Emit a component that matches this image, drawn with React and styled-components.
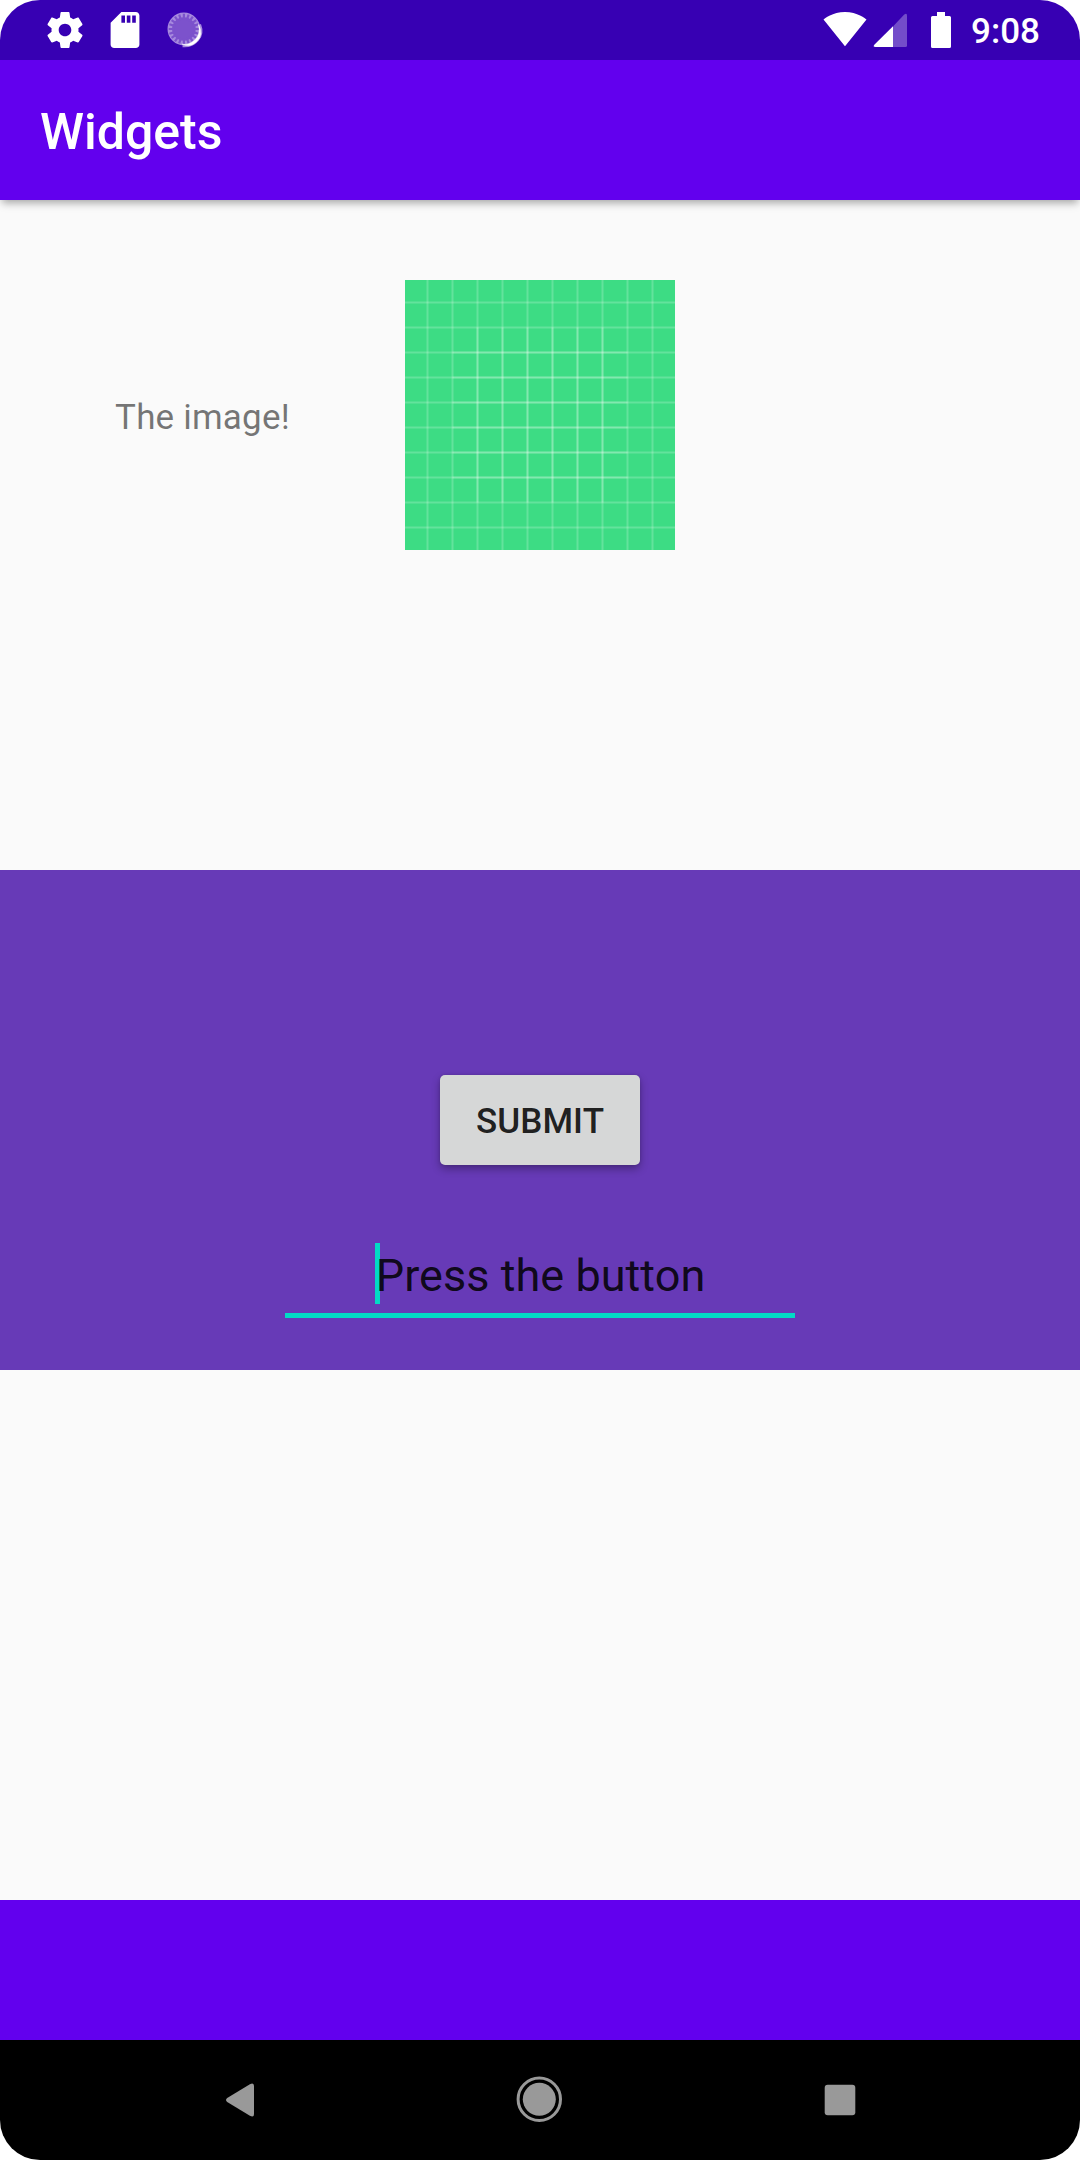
import React from "react";
import styled, { createGlobalStyle } from "styled-components";

const GlobalStyle = createGlobalStyle`
  * { box-sizing: border-box; }
  body {
    margin: 0;
    background: #ffffff;
    font-family: Roboto, "Liberation Sans", sans-serif;
  }
  svg { display: block; flex: none; }
`;

const Screen = styled.div`
  width: 1080px;
  height: 2160px;
  display: flex;
  flex-direction: column;
  overflow: hidden;
  border-radius: 40px;
  background: #fafafa;
`;

const StatusBar = styled.header`
  flex: none;
  height: 60px;
  display: flex;
  align-items: center;
  justify-content: space-between;
  padding: 0 40px 0 43px;
  background: #3700b3;
  color: #ffffff;
  z-index: 2;
`;

const StatusGroup = styled.div`
  display: flex;
  align-items: center;
  gap: ${(p) => p.$gap || 0}px;
`;

const Clock = styled.span`
  font-size: 35px;
  line-height: 41px;
  font-weight: 500;
  margin: 2px 0 0 19px;
`;

const AppBar = styled.div`
  flex: none;
  height: 140px;
  display: flex;
  align-items: center;
  padding: 4px 40px 0;
  background: #6200ee;
  box-shadow: 0 5px 8px -2px rgba(0, 0, 0, 0.34);
  z-index: 1;
`;

const Title = styled.h1`
  margin: 0;
  color: #ffffff;
  font-size: 50px;
  line-height: 58px;
  font-weight: 500;
`;

const Content = styled.main`
  flex: 1;
  display: flex;
  flex-direction: column;
`;

const ImageRow = styled.section`
  height: 670px;
  padding-top: 80px;
  display: grid;
  grid-template-columns: 405px 270px 1fr;
  grid-template-rows: 270px;
  align-items: center;
`;

const Caption = styled.p`
  margin: 5px 0 0;
  text-align: center;
  color: rgba(0, 0, 0, 0.54);
  font-size: 35px;
  line-height: 41px;
  letter-spacing: 0.2px;
`;

const Band = styled.section`
  height: 500px;
  padding-top: 205px;
  display: flex;
  flex-direction: column;
  align-items: center;
  background: #673ab7;
`;

const SubmitButton = styled.button`
  width: 200px;
  height: 90px;
  padding: 3px 0 0;
  border: 0;
  border-radius: 5px;
  background: #d6d7d7;
  color: rgba(0, 0, 0, 0.87);
  font: 500 35px/41px Roboto, "Liberation Sans", sans-serif;
  letter-spacing: 0.1px;
  box-shadow: 0 4px 8px rgba(0, 0, 0, 0.3), 0 0 3px rgba(0, 0, 0, 0.14);
`;

const Field = styled.div`
  width: 510px;
  height: 75px;
  margin-top: 78px;
  display: flex;
  justify-content: center;
  align-items: flex-start;
  border-bottom: 5px solid #03dac5;
`;

const Hint = styled.span`
  height: 61px;
  padding: 6px 0 0 1px;
  white-space: nowrap;
  color: rgba(0, 0, 0, 0.87);
  font-size: 45px;
  line-height: 53px;
  letter-spacing: 0.05px;
  background: linear-gradient(#03dac5, #03dac5) left top / 5px 61px no-repeat;
`;

const BottomBar = styled.div`
  flex: none;
  height: 140px;
  background: #6200ee;
`;

const NavBar = styled.nav`
  flex: none;
  height: 120px;
  padding: 0 90px;
  display: grid;
  grid-template-columns: repeat(3, 300px);
  place-items: center;
  background: #000000;
`;

const GRID_STOPS = [9, 19, 29, 39, 49, 59, 69, 79, 89, 99];
const INNER_STOPS = [29, 39, 49, 59, 69, 79];

function GridImage() {
  return (
    <svg width="270" height="270" viewBox="0 0 108 108">
      <path fill="#3ddc84" d="M0 0h108v108H0z" />
      <g stroke="#ffffff" strokeOpacity="0.2" strokeWidth="0.8">
        {GRID_STOPS.map((n) => <path key={`v${n}`} d={`M${n} 0V108`} />)}
        {GRID_STOPS.map((n) => <path key={`h${n}`} d={`M0 ${n}H108`} />)}
        {INNER_STOPS.map((n) => <path key={`ih${n}`} d={`M19 ${n}H89`} />)}
        {INNER_STOPS.map((n) => <path key={`iv${n}`} d={`M${n} 19V89`} />)}
      </g>
    </svg>
  );
}

function GearIcon() {
  return (
    <svg width="44" height="44" viewBox="-0.22 -0.22 24.44 24.44" fill="#fff">
      <path d="M19.43 12.98c.04-.32.07-.64.07-.98s-.03-.66-.07-.98l2.11-1.65c.19-.15.24-.42.12-.64l-2-3.46c-.12-.22-.39-.3-.61-.22l-2.49 1c-.52-.4-1.08-.73-1.69-.98l-.38-2.65C14.46 2.18 14.25 2 14 2h-4c-.25 0-.46.18-.49.42l-.38 2.65c-.61.25-1.17.59-1.69.98l-2.49-1c-.23-.09-.49 0-.61.22l-2 3.46c-.13.22-.07.49.12.64l2.11 1.65c-.04.32-.07.65-.07.98s.03.66.07.98l-2.11 1.65c-.19.15-.24.42-.12.64l2 3.46c.12.22.39.3.61.22l2.49-1c.52.4 1.08.73 1.69.98l.38 2.65c.03.24.24.42.49.42h4c.25 0 .46-.18.49-.42l.38-2.65c.61-.25 1.17-.59 1.69-.98l2.49 1c.23.09.49 0 .61-.22l2-3.46c.12-.22.07-.49-.12-.64l-2.11-1.65zM12 15.5c-1.93 0-3.5-1.57-3.5-3.5s1.57-3.5 3.5-3.5 3.5 1.57 3.5 3.5-1.57 3.5-3.5 3.5z" />
    </svg>
  );
}

function SdCardIcon() {
  return (
    <svg width="44" height="44" viewBox="-0.22 -0.22 24.44 24.44" fill="#fff">
      <path d="M18 2h-8L4.02 8 4 20c0 1.1.9 2 2 2h12c1.1 0 2-.9 2-2V4c0-1.1-.9-2-2-2zm-6 6h-2V4h2v4zm3 0h-2V4h2v4zm3 0h-2V4h2v4z" />
    </svg>
  );
}

function SyncDialIcon() {
  const ticks = Array.from({ length: 20 }, (_, i) => i * 18);
  return (
    <svg width="44" height="44" viewBox="-0.6 0 44 44">
      <circle cx="21" cy="22" r="15" fill="#7c52cc" />
      <circle cx="20.3" cy="21" r="14.1" fill="none" stroke="#a78ade" strokeWidth="4.6" />
      <g stroke="#7c52cc" strokeWidth="2.2">
        {ticks.map((a) => (
          <path key={a} d="M20.3 5.8v6" transform={`rotate(${a} 20.3 21)`} />
        ))}
      </g>
      <path d="M36 16.5Q39.6 25.5 33.8 32T19 37.7" fill="none" stroke="#a78ade" strokeWidth="3" />
      <path d="M35 16.5Q37.4 26 31.3 31.8T18.5 36.2Q26.5 40 33.4 33.4T35 16.5z" fill="#fff" stroke="#fff" strokeWidth=".5" />
    </svg>
  );
}

function SignalIcons() {
  return (
    <svg width="130" height="60" viewBox="822 0 130 60" fill="#fff">
      <path
        transform="translate(822.84 6.5) scale(1.847)"
        d="M12.01 21.49L23.64 7c-.45-.34-4.93-4-11.64-4C5.28 3 .81 6.66.36 7l11.63 14.49.01.01.01-.01z"
      />
      <path fillOpacity="0.3" d="M893 26.5L904 14.7Q907 12.5 907 15.5V45.5Q907 47 905.5 47H893z" />
      <path d="M893 26.2V47H875.5Q872.6 47 874.3 44.8z" />
      <path d="M937 12h8v4h4.5q1.5 0 1.5 1.5v29q0 1.5-1.5 1.5h-17q-1.5 0-1.5-1.5v-29q0-1.5 1.5-1.5H937z" />
    </svg>
  );
}

function BackIcon() {
  return (
    <svg width="60" height="60" viewBox="210 2070 60 60" fill="#999">
      <path d="M227.2 2098.1L249.9 2084.2Q254 2082 254 2086V2114Q254 2118 249.9 2115.8L227.2 2102Q224.8 2100 227.2 2098.1z" />
    </svg>
  );
}

function HomeIcon() {
  return (
    <svg width="60" height="60" viewBox="510 2070 60 60">
      <circle cx="539.3" cy="2099.3" r="16.5" fill="#999" />
      <circle cx="539.3" cy="2099.3" r="21.2" fill="none" stroke="#999" strokeWidth="3" />
    </svg>
  );
}

function RecentsIcon() {
  return (
    <svg width="60" height="60" viewBox="0 0 60 60" fill="#999">
      <rect x="14.7" y="14.7" width="30.6" height="30.6" rx="3" />
    </svg>
  );
}

export default function App() {
  return (
    <>
      <GlobalStyle />
      <Screen>
        <StatusBar>
          <StatusGroup $gap={16}>
            <GearIcon />
            <SdCardIcon />
            <SyncDialIcon />
          </StatusGroup>
          <StatusGroup>
            <SignalIcons />
            <Clock>9:08</Clock>
          </StatusGroup>
        </StatusBar>
        <AppBar>
          <Title>Widgets</Title>
        </AppBar>
        <Content>
          <ImageRow>
            <Caption>The image!</Caption>
            <GridImage />
          </ImageRow>
          <Band>
            <SubmitButton>SUBMIT</SubmitButton>
            <Field>
              <Hint>Press the button</Hint>
            </Field>
          </Band>
        </Content>
        <BottomBar />
        <NavBar>
          <BackIcon />
          <HomeIcon />
          <RecentsIcon />
        </NavBar>
      </Screen>
    </>
  );
}
